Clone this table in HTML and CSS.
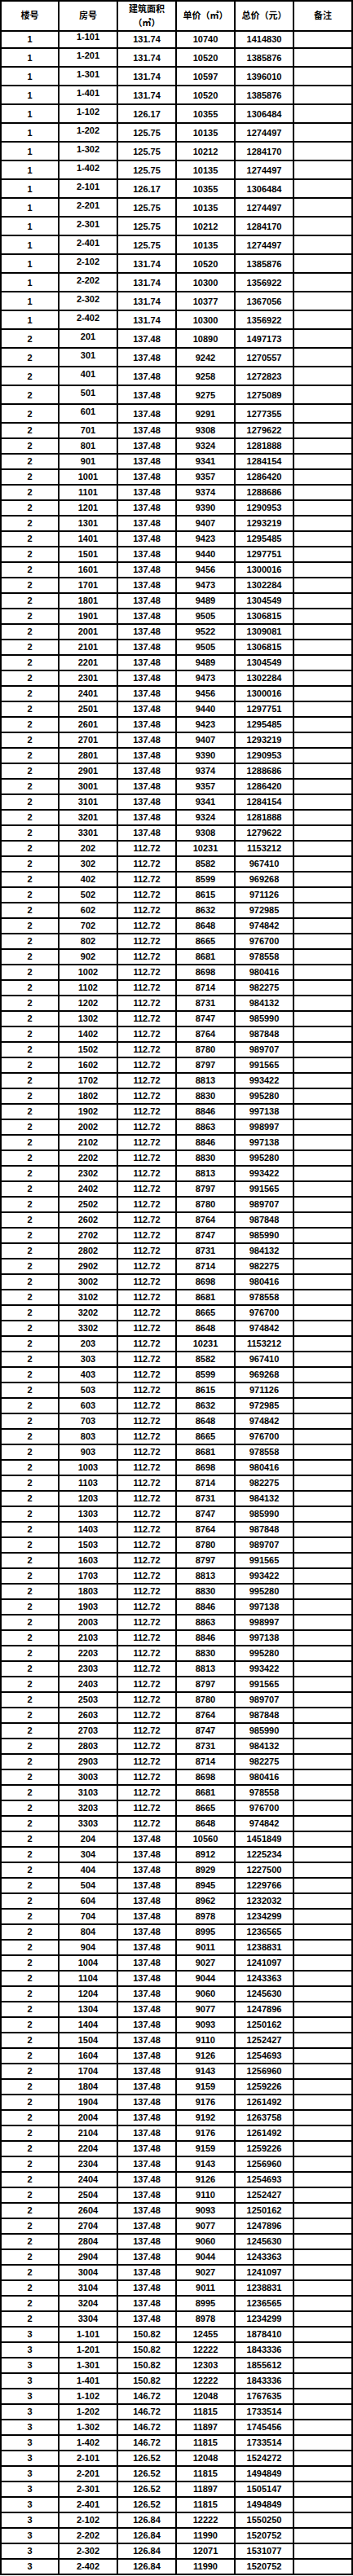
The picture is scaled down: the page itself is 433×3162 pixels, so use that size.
FILE: index.html
```html
<!DOCTYPE html>
<html lang="zh-CN">
<head>
<meta charset="utf-8">
<title>价目表</title>
<link rel="stylesheet" href="styles.css">
</head>
<body>
<div class="sheet">
<div class="row head"><span>楼号</span><span>房号</span><span class="two"><i>建筑面积</i><i>（㎡）</i></span><span>单价（㎡）</span><span>总价（元）</span><span>备注</span></div>
<div class="row tall"><span>1</span><span class="room">1-101</span><span>131.74</span><span>10740</span><span>1414830</span><span></span></div>
<div class="row tall"><span>1</span><span class="room">1-201</span><span>131.74</span><span>10520</span><span>1385876</span><span></span></div>
<div class="row tall"><span>1</span><span class="room">1-301</span><span>131.74</span><span>10597</span><span>1396010</span><span></span></div>
<div class="row tall"><span>1</span><span class="room">1-401</span><span>131.74</span><span>10520</span><span>1385876</span><span></span></div>
<div class="row tall"><span>1</span><span class="room">1-102</span><span>126.17</span><span>10355</span><span>1306484</span><span></span></div>
<div class="row tall"><span>1</span><span class="room">1-202</span><span>125.75</span><span>10135</span><span>1274497</span><span></span></div>
<div class="row tall"><span>1</span><span class="room">1-302</span><span>125.75</span><span>10212</span><span>1284170</span><span></span></div>
<div class="row tall"><span>1</span><span class="room">1-402</span><span>125.75</span><span>10135</span><span>1274497</span><span></span></div>
<div class="row tall"><span>1</span><span class="room">2-101</span><span>126.17</span><span>10355</span><span>1306484</span><span></span></div>
<div class="row tall"><span>1</span><span class="room">2-201</span><span>125.75</span><span>10135</span><span>1274497</span><span></span></div>
<div class="row tall"><span>1</span><span class="room">2-301</span><span>125.75</span><span>10212</span><span>1284170</span><span></span></div>
<div class="row tall"><span>1</span><span class="room">2-401</span><span>125.75</span><span>10135</span><span>1274497</span><span></span></div>
<div class="row tall"><span>1</span><span class="room">2-102</span><span>131.74</span><span>10520</span><span>1385876</span><span></span></div>
<div class="row tall"><span>1</span><span class="room">2-202</span><span>131.74</span><span>10300</span><span>1356922</span><span></span></div>
<div class="row tall"><span>1</span><span class="room">2-302</span><span>131.74</span><span>10377</span><span>1367056</span><span></span></div>
<div class="row tall"><span>1</span><span class="room">2-402</span><span>131.74</span><span>10300</span><span>1356922</span><span></span></div>
<div class="row tall"><span>2</span><span class="room">201</span><span>137.48</span><span>10890</span><span>1497173</span><span></span></div>
<div class="row tall"><span>2</span><span class="room">301</span><span>137.48</span><span>9242</span><span>1270557</span><span></span></div>
<div class="row tall"><span>2</span><span class="room">401</span><span>137.48</span><span>9258</span><span>1272823</span><span></span></div>
<div class="row tall"><span>2</span><span class="room">501</span><span>137.48</span><span>9275</span><span>1275089</span><span></span></div>
<div class="row tall"><span>2</span><span class="room">601</span><span>137.48</span><span>9291</span><span>1277355</span><span></span></div>
<div class="row"><span>2</span><span>701</span><span>137.48</span><span>9308</span><span>1279622</span><span></span></div>
<div class="row"><span>2</span><span>801</span><span>137.48</span><span>9324</span><span>1281888</span><span></span></div>
<div class="row"><span>2</span><span>901</span><span>137.48</span><span>9341</span><span>1284154</span><span></span></div>
<div class="row"><span>2</span><span>1001</span><span>137.48</span><span>9357</span><span>1286420</span><span></span></div>
<div class="row"><span>2</span><span>1101</span><span>137.48</span><span>9374</span><span>1288686</span><span></span></div>
<div class="row"><span>2</span><span>1201</span><span>137.48</span><span>9390</span><span>1290953</span><span></span></div>
<div class="row"><span>2</span><span>1301</span><span>137.48</span><span>9407</span><span>1293219</span><span></span></div>
<div class="row"><span>2</span><span>1401</span><span>137.48</span><span>9423</span><span>1295485</span><span></span></div>
<div class="row"><span>2</span><span>1501</span><span>137.48</span><span>9440</span><span>1297751</span><span></span></div>
<div class="row"><span>2</span><span>1601</span><span>137.48</span><span>9456</span><span>1300016</span><span></span></div>
<div class="row"><span>2</span><span>1701</span><span>137.48</span><span>9473</span><span>1302284</span><span></span></div>
<div class="row"><span>2</span><span>1801</span><span>137.48</span><span>9489</span><span>1304549</span><span></span></div>
<div class="row"><span>2</span><span>1901</span><span>137.48</span><span>9505</span><span>1306815</span><span></span></div>
<div class="row"><span>2</span><span>2001</span><span>137.48</span><span>9522</span><span>1309081</span><span></span></div>
<div class="row"><span>2</span><span>2101</span><span>137.48</span><span>9505</span><span>1306815</span><span></span></div>
<div class="row"><span>2</span><span>2201</span><span>137.48</span><span>9489</span><span>1304549</span><span></span></div>
<div class="row"><span>2</span><span>2301</span><span>137.48</span><span>9473</span><span>1302284</span><span></span></div>
<div class="row"><span>2</span><span>2401</span><span>137.48</span><span>9456</span><span>1300016</span><span></span></div>
<div class="row"><span>2</span><span>2501</span><span>137.48</span><span>9440</span><span>1297751</span><span></span></div>
<div class="row"><span>2</span><span>2601</span><span>137.48</span><span>9423</span><span>1295485</span><span></span></div>
<div class="row"><span>2</span><span>2701</span><span>137.48</span><span>9407</span><span>1293219</span><span></span></div>
<div class="row"><span>2</span><span>2801</span><span>137.48</span><span>9390</span><span>1290953</span><span></span></div>
<div class="row"><span>2</span><span>2901</span><span>137.48</span><span>9374</span><span>1288686</span><span></span></div>
<div class="row"><span>2</span><span>3001</span><span>137.48</span><span>9357</span><span>1286420</span><span></span></div>
<div class="row"><span>2</span><span>3101</span><span>137.48</span><span>9341</span><span>1284154</span><span></span></div>
<div class="row"><span>2</span><span>3201</span><span>137.48</span><span>9324</span><span>1281888</span><span></span></div>
<div class="row"><span>2</span><span>3301</span><span>137.48</span><span>9308</span><span>1279622</span><span></span></div>
<div class="row"><span>2</span><span>202</span><span>112.72</span><span>10231</span><span>1153212</span><span></span></div>
<div class="row"><span>2</span><span>302</span><span>112.72</span><span>8582</span><span>967410</span><span></span></div>
<div class="row"><span>2</span><span>402</span><span>112.72</span><span>8599</span><span>969268</span><span></span></div>
<div class="row"><span>2</span><span>502</span><span>112.72</span><span>8615</span><span>971126</span><span></span></div>
<div class="row"><span>2</span><span>602</span><span>112.72</span><span>8632</span><span>972985</span><span></span></div>
<div class="row"><span>2</span><span>702</span><span>112.72</span><span>8648</span><span>974842</span><span></span></div>
<div class="row"><span>2</span><span>802</span><span>112.72</span><span>8665</span><span>976700</span><span></span></div>
<div class="row"><span>2</span><span>902</span><span>112.72</span><span>8681</span><span>978558</span><span></span></div>
<div class="row"><span>2</span><span>1002</span><span>112.72</span><span>8698</span><span>980416</span><span></span></div>
<div class="row"><span>2</span><span>1102</span><span>112.72</span><span>8714</span><span>982275</span><span></span></div>
<div class="row"><span>2</span><span>1202</span><span>112.72</span><span>8731</span><span>984132</span><span></span></div>
<div class="row"><span>2</span><span>1302</span><span>112.72</span><span>8747</span><span>985990</span><span></span></div>
<div class="row"><span>2</span><span>1402</span><span>112.72</span><span>8764</span><span>987848</span><span></span></div>
<div class="row"><span>2</span><span>1502</span><span>112.72</span><span>8780</span><span>989707</span><span></span></div>
<div class="row"><span>2</span><span>1602</span><span>112.72</span><span>8797</span><span>991565</span><span></span></div>
<div class="row"><span>2</span><span>1702</span><span>112.72</span><span>8813</span><span>993422</span><span></span></div>
<div class="row"><span>2</span><span>1802</span><span>112.72</span><span>8830</span><span>995280</span><span></span></div>
<div class="row"><span>2</span><span>1902</span><span>112.72</span><span>8846</span><span>997138</span><span></span></div>
<div class="row"><span>2</span><span>2002</span><span>112.72</span><span>8863</span><span>998997</span><span></span></div>
<div class="row"><span>2</span><span>2102</span><span>112.72</span><span>8846</span><span>997138</span><span></span></div>
<div class="row"><span>2</span><span>2202</span><span>112.72</span><span>8830</span><span>995280</span><span></span></div>
<div class="row"><span>2</span><span>2302</span><span>112.72</span><span>8813</span><span>993422</span><span></span></div>
<div class="row"><span>2</span><span>2402</span><span>112.72</span><span>8797</span><span>991565</span><span></span></div>
<div class="row"><span>2</span><span>2502</span><span>112.72</span><span>8780</span><span>989707</span><span></span></div>
<div class="row"><span>2</span><span>2602</span><span>112.72</span><span>8764</span><span>987848</span><span></span></div>
<div class="row"><span>2</span><span>2702</span><span>112.72</span><span>8747</span><span>985990</span><span></span></div>
<div class="row"><span>2</span><span>2802</span><span>112.72</span><span>8731</span><span>984132</span><span></span></div>
<div class="row"><span>2</span><span>2902</span><span>112.72</span><span>8714</span><span>982275</span><span></span></div>
<div class="row"><span>2</span><span>3002</span><span>112.72</span><span>8698</span><span>980416</span><span></span></div>
<div class="row"><span>2</span><span>3102</span><span>112.72</span><span>8681</span><span>978558</span><span></span></div>
<div class="row"><span>2</span><span>3202</span><span>112.72</span><span>8665</span><span>976700</span><span></span></div>
<div class="row"><span>2</span><span>3302</span><span>112.72</span><span>8648</span><span>974842</span><span></span></div>
<div class="row"><span>2</span><span>203</span><span>112.72</span><span>10231</span><span>1153212</span><span></span></div>
<div class="row"><span>2</span><span>303</span><span>112.72</span><span>8582</span><span>967410</span><span></span></div>
<div class="row"><span>2</span><span>403</span><span>112.72</span><span>8599</span><span>969268</span><span></span></div>
<div class="row"><span>2</span><span>503</span><span>112.72</span><span>8615</span><span>971126</span><span></span></div>
<div class="row"><span>2</span><span>603</span><span>112.72</span><span>8632</span><span>972985</span><span></span></div>
<div class="row"><span>2</span><span>703</span><span>112.72</span><span>8648</span><span>974842</span><span></span></div>
<div class="row"><span>2</span><span>803</span><span>112.72</span><span>8665</span><span>976700</span><span></span></div>
<div class="row"><span>2</span><span>903</span><span>112.72</span><span>8681</span><span>978558</span><span></span></div>
<div class="row"><span>2</span><span>1003</span><span>112.72</span><span>8698</span><span>980416</span><span></span></div>
<div class="row"><span>2</span><span>1103</span><span>112.72</span><span>8714</span><span>982275</span><span></span></div>
<div class="row"><span>2</span><span>1203</span><span>112.72</span><span>8731</span><span>984132</span><span></span></div>
<div class="row"><span>2</span><span>1303</span><span>112.72</span><span>8747</span><span>985990</span><span></span></div>
<div class="row"><span>2</span><span>1403</span><span>112.72</span><span>8764</span><span>987848</span><span></span></div>
<div class="row"><span>2</span><span>1503</span><span>112.72</span><span>8780</span><span>989707</span><span></span></div>
<div class="row"><span>2</span><span>1603</span><span>112.72</span><span>8797</span><span>991565</span><span></span></div>
<div class="row"><span>2</span><span>1703</span><span>112.72</span><span>8813</span><span>993422</span><span></span></div>
<div class="row"><span>2</span><span>1803</span><span>112.72</span><span>8830</span><span>995280</span><span></span></div>
<div class="row"><span>2</span><span>1903</span><span>112.72</span><span>8846</span><span>997138</span><span></span></div>
<div class="row"><span>2</span><span>2003</span><span>112.72</span><span>8863</span><span>998997</span><span></span></div>
<div class="row"><span>2</span><span>2103</span><span>112.72</span><span>8846</span><span>997138</span><span></span></div>
<div class="row"><span>2</span><span>2203</span><span>112.72</span><span>8830</span><span>995280</span><span></span></div>
<div class="row"><span>2</span><span>2303</span><span>112.72</span><span>8813</span><span>993422</span><span></span></div>
<div class="row"><span>2</span><span>2403</span><span>112.72</span><span>8797</span><span>991565</span><span></span></div>
<div class="row"><span>2</span><span>2503</span><span>112.72</span><span>8780</span><span>989707</span><span></span></div>
<div class="row"><span>2</span><span>2603</span><span>112.72</span><span>8764</span><span>987848</span><span></span></div>
<div class="row"><span>2</span><span>2703</span><span>112.72</span><span>8747</span><span>985990</span><span></span></div>
<div class="row"><span>2</span><span>2803</span><span>112.72</span><span>8731</span><span>984132</span><span></span></div>
<div class="row"><span>2</span><span>2903</span><span>112.72</span><span>8714</span><span>982275</span><span></span></div>
<div class="row"><span>2</span><span>3003</span><span>112.72</span><span>8698</span><span>980416</span><span></span></div>
<div class="row"><span>2</span><span>3103</span><span>112.72</span><span>8681</span><span>978558</span><span></span></div>
<div class="row"><span>2</span><span>3203</span><span>112.72</span><span>8665</span><span>976700</span><span></span></div>
<div class="row"><span>2</span><span>3303</span><span>112.72</span><span>8648</span><span>974842</span><span></span></div>
<div class="row"><span>2</span><span>204</span><span>137.48</span><span>10560</span><span>1451849</span><span></span></div>
<div class="row"><span>2</span><span>304</span><span>137.48</span><span>8912</span><span>1225234</span><span></span></div>
<div class="row"><span>2</span><span>404</span><span>137.48</span><span>8929</span><span>1227500</span><span></span></div>
<div class="row"><span>2</span><span>504</span><span>137.48</span><span>8945</span><span>1229766</span><span></span></div>
<div class="row"><span>2</span><span>604</span><span>137.48</span><span>8962</span><span>1232032</span><span></span></div>
<div class="row"><span>2</span><span>704</span><span>137.48</span><span>8978</span><span>1234299</span><span></span></div>
<div class="row"><span>2</span><span>804</span><span>137.48</span><span>8995</span><span>1236565</span><span></span></div>
<div class="row"><span>2</span><span>904</span><span>137.48</span><span>9011</span><span>1238831</span><span></span></div>
<div class="row"><span>2</span><span>1004</span><span>137.48</span><span>9027</span><span>1241097</span><span></span></div>
<div class="row"><span>2</span><span>1104</span><span>137.48</span><span>9044</span><span>1243363</span><span></span></div>
<div class="row"><span>2</span><span>1204</span><span>137.48</span><span>9060</span><span>1245630</span><span></span></div>
<div class="row"><span>2</span><span>1304</span><span>137.48</span><span>9077</span><span>1247896</span><span></span></div>
<div class="row"><span>2</span><span>1404</span><span>137.48</span><span>9093</span><span>1250162</span><span></span></div>
<div class="row"><span>2</span><span>1504</span><span>137.48</span><span>9110</span><span>1252427</span><span></span></div>
<div class="row"><span>2</span><span>1604</span><span>137.48</span><span>9126</span><span>1254693</span><span></span></div>
<div class="row"><span>2</span><span>1704</span><span>137.48</span><span>9143</span><span>1256960</span><span></span></div>
<div class="row"><span>2</span><span>1804</span><span>137.48</span><span>9159</span><span>1259226</span><span></span></div>
<div class="row"><span>2</span><span>1904</span><span>137.48</span><span>9176</span><span>1261492</span><span></span></div>
<div class="row"><span>2</span><span>2004</span><span>137.48</span><span>9192</span><span>1263758</span><span></span></div>
<div class="row"><span>2</span><span>2104</span><span>137.48</span><span>9176</span><span>1261492</span><span></span></div>
<div class="row"><span>2</span><span>2204</span><span>137.48</span><span>9159</span><span>1259226</span><span></span></div>
<div class="row"><span>2</span><span>2304</span><span>137.48</span><span>9143</span><span>1256960</span><span></span></div>
<div class="row"><span>2</span><span>2404</span><span>137.48</span><span>9126</span><span>1254693</span><span></span></div>
<div class="row"><span>2</span><span>2504</span><span>137.48</span><span>9110</span><span>1252427</span><span></span></div>
<div class="row"><span>2</span><span>2604</span><span>137.48</span><span>9093</span><span>1250162</span><span></span></div>
<div class="row"><span>2</span><span>2704</span><span>137.48</span><span>9077</span><span>1247896</span><span></span></div>
<div class="row"><span>2</span><span>2804</span><span>137.48</span><span>9060</span><span>1245630</span><span></span></div>
<div class="row"><span>2</span><span>2904</span><span>137.48</span><span>9044</span><span>1243363</span><span></span></div>
<div class="row"><span>2</span><span>3004</span><span>137.48</span><span>9027</span><span>1241097</span><span></span></div>
<div class="row"><span>2</span><span>3104</span><span>137.48</span><span>9011</span><span>1238831</span><span></span></div>
<div class="row"><span>2</span><span>3204</span><span>137.48</span><span>8995</span><span>1236565</span><span></span></div>
<div class="row"><span>2</span><span>3304</span><span>137.48</span><span>8978</span><span>1234299</span><span></span></div>
<div class="row"><span>3</span><span>1-101</span><span>150.82</span><span>12455</span><span>1878410</span><span></span></div>
<div class="row"><span>3</span><span>1-201</span><span>150.82</span><span>12222</span><span>1843336</span><span></span></div>
<div class="row"><span>3</span><span>1-301</span><span>150.82</span><span>12303</span><span>1855612</span><span></span></div>
<div class="row"><span>3</span><span>1-401</span><span>150.82</span><span>12222</span><span>1843336</span><span></span></div>
<div class="row"><span>3</span><span>1-102</span><span>146.72</span><span>12048</span><span>1767635</span><span></span></div>
<div class="row"><span>3</span><span>1-202</span><span>146.72</span><span>11815</span><span>1733514</span><span></span></div>
<div class="row"><span>3</span><span>1-302</span><span>146.72</span><span>11897</span><span>1745456</span><span></span></div>
<div class="row"><span>3</span><span>1-402</span><span>146.72</span><span>11815</span><span>1733514</span><span></span></div>
<div class="row"><span>3</span><span>2-101</span><span>126.52</span><span>12048</span><span>1524272</span><span></span></div>
<div class="row"><span>3</span><span>2-201</span><span>126.52</span><span>11815</span><span>1494849</span><span></span></div>
<div class="row"><span>3</span><span>2-301</span><span>126.52</span><span>11897</span><span>1505147</span><span></span></div>
<div class="row"><span>3</span><span>2-401</span><span>126.52</span><span>11815</span><span>1494849</span><span></span></div>
<div class="row"><span>3</span><span>2-102</span><span>126.84</span><span>12222</span><span>1550250</span><span></span></div>
<div class="row"><span>3</span><span>2-202</span><span>126.84</span><span>11990</span><span>1520752</span><span></span></div>
<div class="row"><span>3</span><span>2-302</span><span>126.84</span><span>12071</span><span>1531077</span><span></span></div>
<div class="row"><span>3</span><span>2-402</span><span>126.84</span><span>11990</span><span>1520752</span><span></span></div>
</div>
</body>
</html>
```
FILE: styles.css
```css
html, body {
  margin: 0;
  padding: 0;
  background: #fff;
}

body {
  font-family: "Liberation Sans", "Noto Sans CJK SC", sans-serif;
  font-size: 11px;
  font-weight: 700;
  color: #000;
  line-height: 1;
}

.sheet {
  width: 433px;
  box-sizing: border-box;
  border-top: 2px solid #000;
  border-left: 2px solid #000;
}

.row {
  display: grid;
  grid-template-columns: 71px repeat(5, 72px);
  height: 19px;
}

.row > span {
  box-sizing: border-box;
  border-right: 2px solid #000;
  border-bottom: 2px solid #000;
  display: flex;
  align-items: center;
  justify-content: center;
  white-space: nowrap;
}

.row.tall {
  height: 23px;
}

.row.tall > span {
  padding-top: 1px;
}

.row.tall > .room {
  padding-top: 0;
  padding-bottom: 4px;
}

.row.head {
  height: 35px;
}

.row.head > span {
  font-family: "Noto Sans CJK SC", sans-serif;
  font-size: 11px;
  font-weight: 700;
  padding-bottom: 2px;
}

.row.head > .two {
  flex-direction: column;
  line-height: 17px;
  padding-bottom: 1px;
}

.two > i {
  font-style: normal;
  display: block;
}
```
